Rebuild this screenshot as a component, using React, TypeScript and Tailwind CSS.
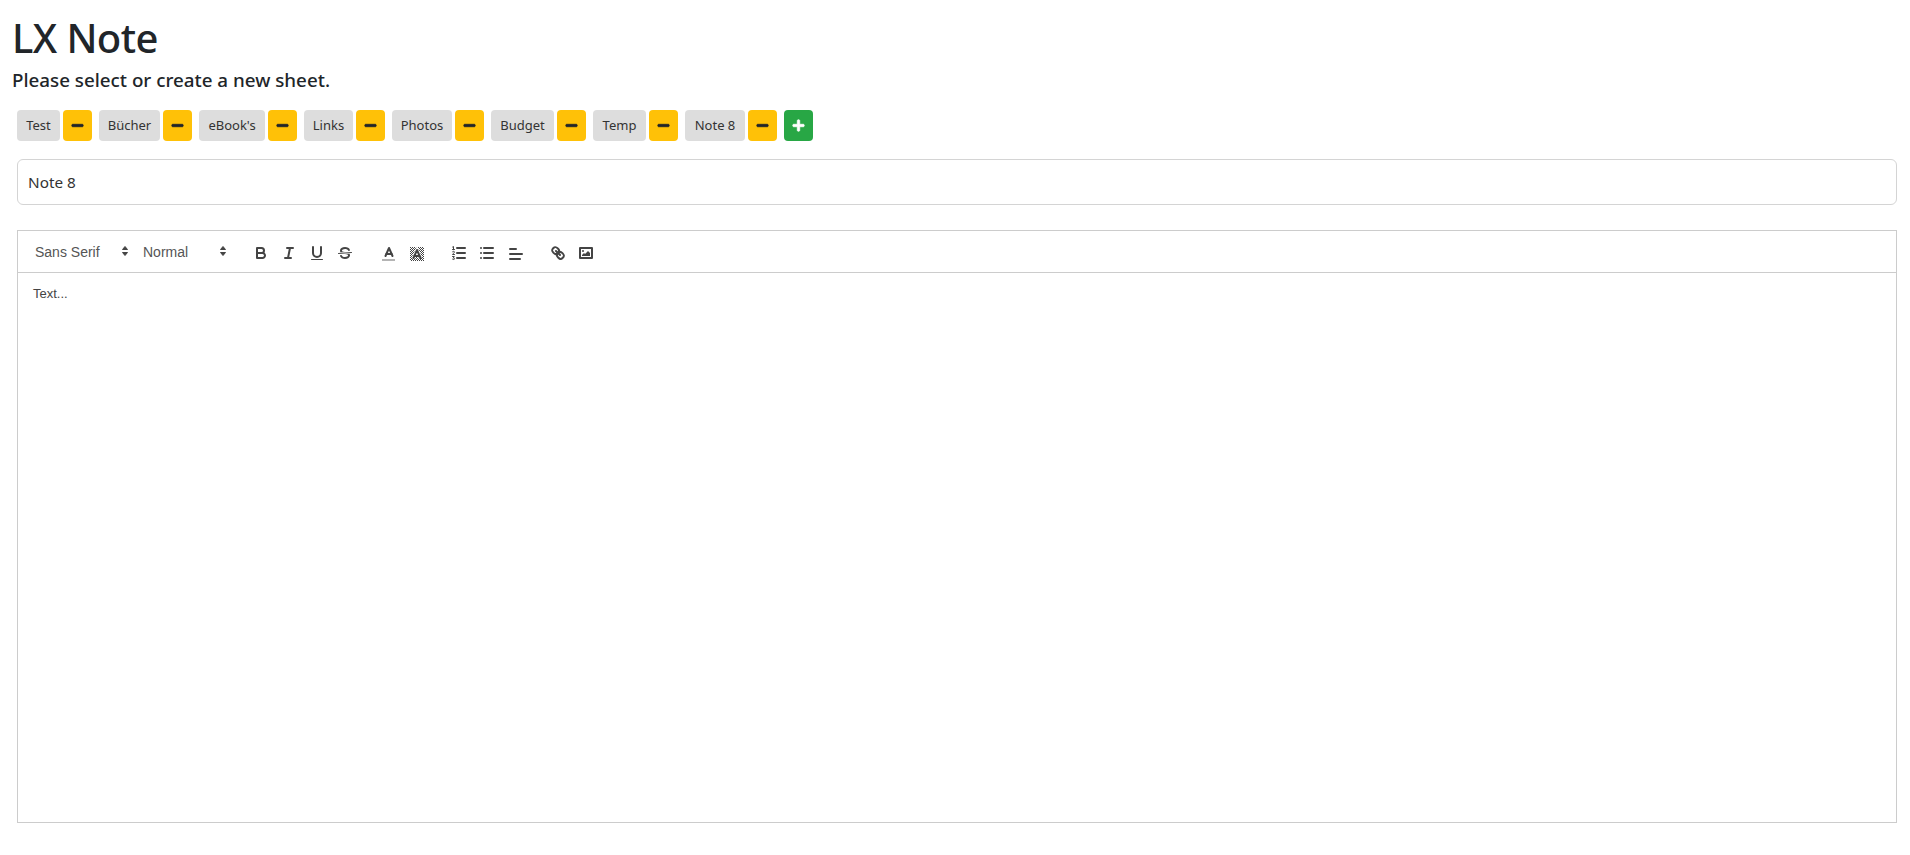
import { FaMinus, FaPlus } from 'react-icons/fa'

const sheets = [
  { name: 'Test', w: 'w-[43px]' },
  { name: 'Bücher', w: 'w-[61px]' },
  { name: "eBook's", w: 'w-[66px]' },
  { name: 'Links', w: 'w-[49px]' },
  { name: 'Photos', w: 'w-[60px]' },
  { name: 'Budget', w: 'w-[63px]' },
  { name: 'Temp', w: 'w-[53px]' },
  { name: 'Note 8', w: 'w-[60px]' },
]

const stroke = { fill: 'none', stroke: '#444', strokeWidth: 2, strokeLinecap: 'round', strokeLinejoin: 'round' } as const
const thin = { ...stroke, strokeWidth: 1 }

function Tool({ children, picker = false }: { children: React.ReactNode; picker?: boolean }) {
  // the colour and align controls sit a little lower than plain buttons, same as in quill
  return (
    <button className={picker ? 'w-7 h-6 pl-[6px] pt-[6px] block shrink-0' : 'w-7 h-6 pl-[5px] pt-[4px] block shrink-0'}>
      <svg viewBox="0 0 18 18" className="w-[18px] h-[18px] block">{children}</svg>
    </button>
  )
}

function Picker({ label, w }: { label: string; w: string }) {
  return (
    <div className={`${w} h-6 pl-[9px] flex items-center justify-between text-[14px] text-[#555] shrink-0`}>
      <span className="pt-[2px]">{label}</span>
      <svg viewBox="0 0 18 18" className="w-[18px] h-[18px]">
        <polygon fill="#444" points="6.5 10.5 9 13.5 11.5 10.5" stroke="#444" strokeWidth="1" strokeLinejoin="round" />
        <polygon fill="#444" points="6.5 7.5 9 4.5 11.5 7.5" stroke="#444" strokeWidth="1" strokeLinejoin="round" />
      </svg>
    </div>
  )
}

// dotted fill behind the "background colour" glyph
const dots: [number, number][] = []
for (let y = 2; y < 16; y++) {
  for (let x = 2; x < 16; x++) {
    if ((x + y) % 2 === 0) dots.push([x, y])
  }
}

export default function App() {
  return (
    <div className="min-h-[855px] bg-white px-3 pt-[14px] text-[#212529] font-['Noto_Sans',sans-serif]">
      <h1 className="text-[40px] leading-[48px] font-medium tracking-[-0.6px]">LX Note</h1>
      <p className="mt-[7px] text-[18.8px] leading-[22px] font-medium">Please select or create a new sheet.</p>

      <div className="ml-[5px] mr-[1px]">
        <div className="mt-[19px] flex gap-[7px] text-[13px] leading-[31px]">
          {sheets.map(s => (
            <div key={s.name} className="flex gap-[3px]">
              <button className={`${s.w} h-[31px] rounded-[4px] bg-[#ddd] text-center text-[#333] whitespace-nowrap`}>{s.name}</button>
              <button className="w-[29px] h-[31px] rounded-[4px] bg-[#ffc107] flex items-center justify-center text-[#212529]">
                <FaMinus size={13} stroke="currentColor" strokeWidth={30} />
              </button>
            </div>
          ))}
          <button className="w-[29px] h-[31px] rounded-[4px] bg-[#28a745] flex items-center justify-center text-white">
            <FaPlus size={13} stroke="currentColor" strokeWidth={30} />
          </button>
        </div>

        <div className="mt-[18px] h-[46px] rounded-[6px] border border-[#d4d4d4] px-[10px] flex items-center text-[15.3px] text-[#333]">
          Note 8
        </div>

        <div className="mt-[25px] h-[43px] border border-[#ccc] p-2 flex font-['Liberation_Sans',sans-serif]">
          <div className="flex mr-[15px]">
            <Picker label="Sans Serif" w="w-[108px]" />
            <Picker label="Normal" w="w-[98px]" />
          </div>
          <div className="flex mr-[15px]">
            <Tool>
              <path {...stroke} d="M5,4H9.5A2.5,2.5,0,0,1,12,6.5v0A2.5,2.5,0,0,1,9.5,9H5A0,0,0,0,1,5,9V4A0,0,0,0,1,5,4Z" />
              <path {...stroke} d="M5,9h5.5A2.5,2.5,0,0,1,13,11.5v0A2.5,2.5,0,0,1,10.5,14H5a0,0,0,0,1,0,0V9A0,0,0,0,1,5,9Z" />
            </Tool>
            <Tool>
              <line {...stroke} x1="7" x2="13" y1="4" y2="4" />
              <line {...stroke} x1="5" x2="11" y1="14" y2="14" />
              <line {...stroke} x1="8" x2="10" y1="14" y2="4" />
            </Tool>
            <Tool>
              <path {...stroke} d="M5,3V9a4.012,4.012,0,0,0,4,4H9a4.012,4.012,0,0,0,4-4V3" />
              <rect fill="#444" height="1" rx=".5" ry=".5" width="12" x="3" y="15" />
            </Tool>
            <Tool>
              <line {...thin} x1="15.5" x2="2.5" y1="8.5" y2="9.5" />
              <path fill="#444" d="M9.007,8C6.542,7.791,6,7.519,6,6.5,6,5.792,7.283,5,9,5c1.571,0,2.765.679,2.969,1.309a1,1,0,0,0,1.9-.617C13.356,4.106,11.354,3,9,3,6.2,3,4,4.538,4,6.5a3.2,3.2,0,0,0,.5,1.843Z" />
              <path fill="#444" d="M8.984,10C11.457,10.208,12,10.479,12,11.5c0,.708-1.283,1.5-3,1.5-1.571,0-2.765-.679-2.969-1.309a1,1,0,1,0-1.9.617C4.644,13.894,6.646,15,9,15c2.8,0,5-1.538,5-3.5a3.2,3.2,0,0,0-.5-1.843Z" />
            </Tool>
          </div>
          <div className="flex mr-[15px]">
            <Tool picker>
              <line {...stroke} strokeOpacity=".4" strokeLinecap="butt" x1="2" x2="15" y1="15" y2="15" />
              <polyline {...stroke} points="5.5 11 9 3 12.5 11" />
              <line {...stroke} x1="11.63" x2="6.38" y1="9" y2="9" />
            </Tool>
            <Tool picker>
              {dots.map(([x, y]) => (
                <rect key={`${x}-${y}`} fill="#444" width="1" height="1" x={x} y={y} />
              ))}
              <polyline fill="none" stroke="#fff" strokeWidth="3.5" points="5.5 13 9 5 12.5 13" />
              <polyline {...stroke} points="5.5 13 9 5 12.5 13" />
              <line {...stroke} x1="11.63" x2="6.38" y1="11" y2="11" />
            </Tool>
          </div>
          <div className="flex mr-[15px]">
            <Tool>
              <line {...stroke} x1="7" x2="15" y1="4" y2="4" />
              <line {...stroke} x1="7" x2="15" y1="9" y2="9" />
              <line {...stroke} x1="7" x2="15" y1="14" y2="14" />
              <line {...thin} x1="2.5" x2="4.5" y1="5.5" y2="5.5" />
              <path {...thin} d="M3.5,5.5V2.5L2.6,3" />
              <path {...thin} d="M2.5,7.7C3,7,4.5,7.2,4.5,8.1C4.5,9,2.7,9.5,2.5,10.5H4.5" />
              <path {...thin} d="M2.5,12.5H4.3L3.3,14C4,13.8,4.5,14.2,4.5,14.8C4.5,15.7,3,15.8,2.5,15.2" />
            </Tool>
            <Tool>
              <line {...stroke} x1="6" x2="15" y1="4" y2="4" />
              <line {...stroke} x1="6" x2="15" y1="9" y2="9" />
              <line {...stroke} x1="6" x2="15" y1="14" y2="14" />
              <line {...stroke} x1="3" x2="3" y1="4" y2="4" />
              <line {...stroke} x1="3" x2="3" y1="9" y2="9" />
              <line {...stroke} x1="3" x2="3" y1="14" y2="14" />
            </Tool>
            <Tool picker>
              <line {...stroke} x1="3" x2="15" y1="9" y2="9" />
              <line {...stroke} x1="3" x2="13" y1="14" y2="14" />
              <line {...stroke} x1="3" x2="9" y1="4" y2="4" />
            </Tool>
          </div>
          <div className="flex">
            <Tool>
              <line {...stroke} x1="7" x2="11" y1="7" y2="11" />
              <path {...stroke} d="M8.9,4.577a3.476,3.476,0,0,1,.36,4.679A3.476,3.476,0,0,1,4.577,8.9C3.185,7.5,2.035,6.4,4.217,4.217S7.5,3.185,8.9,4.577Z" />
              <path {...stroke} d="M13.423,9.1a3.476,3.476,0,0,0-4.679-.36,3.476,3.476,0,0,0,.36,4.679c1.392,1.392,2.5,2.542,4.679.36S14.815,10.5,13.423,9.1Z" />
            </Tool>
            <Tool>
              <rect {...stroke} height="10" width="12" x="3" y="4" />
              <circle fill="#444" cx="6" cy="7" r="1" />
              <polyline fill="#444" points="5 12 5 11 7 9 8 10 11 7 13 9 13 12 5 12" />
            </Tool>
          </div>
        </div>

        <div className="h-[550px] border border-t-0 border-[#ccc] px-[15px] py-3 text-[13px] leading-[18.46px] text-[#444] font-['Liberation_Sans',sans-serif]">
          Text...
        </div>
      </div>
    </div>
  )
}
